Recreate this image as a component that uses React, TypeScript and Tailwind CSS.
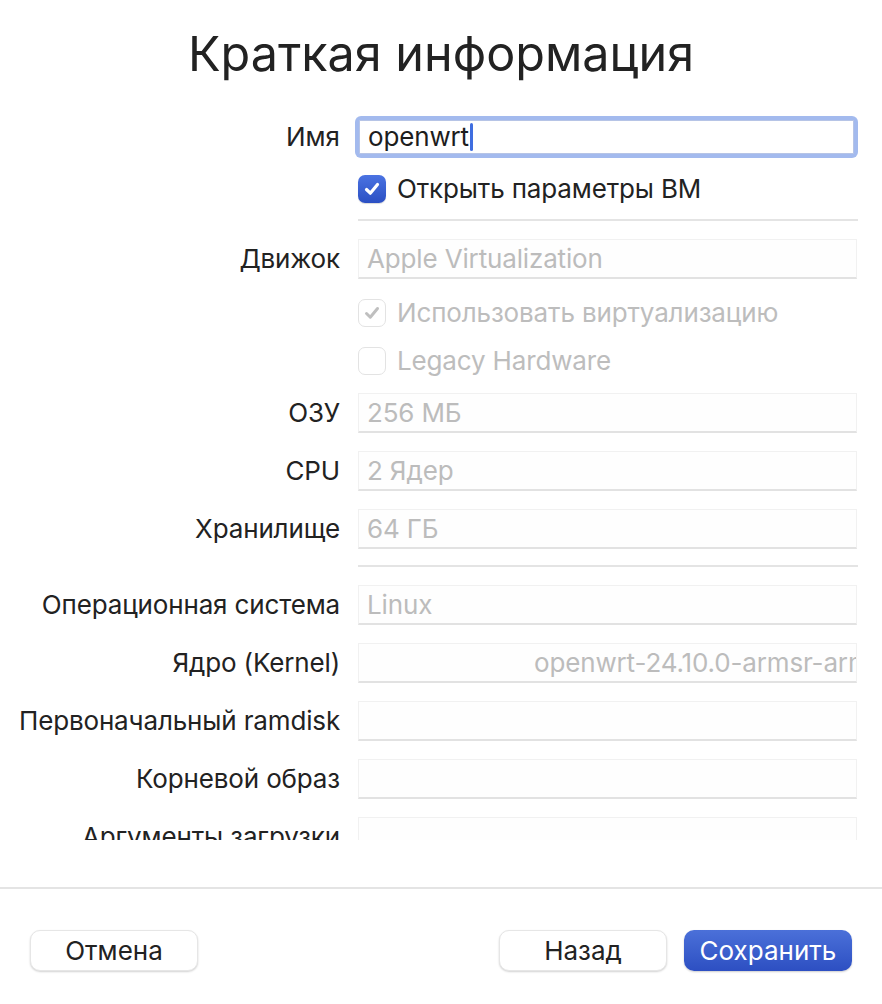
import React from "react";

const FONT = { fontFamily: "Inter, 'Noto Sans', sans-serif" };

function Check({ color, w }: { color: string; w: number }) {
  return (
    <svg width="18" height="18" viewBox="0 0 18 18" fill="none">
      <path d="M3.5 9.5 L7.3 13.2 L14.5 4.5" stroke={color} strokeWidth={w} strokeLinecap="round" strokeLinejoin="round" />
    </svg>
  );
}

function CheckRow({ label, kind }: { label: string; kind: "on" | "disabledOn" | "disabledOff" }) {
  return (
    <div className="flex h-[28px] items-center">
      <div className="w-[358px] shrink-0" />
      {kind === "on" ? (
        <div className="flex h-[28px] w-[28px] items-center justify-center rounded-[7px] bg-gradient-to-b from-[#4b73e2] to-[#2b4fc3] shadow-[0_1px_1px_rgba(0,0,0,0.15)]">
          <Check color="#ffffff" w={3.2} />
        </div>
      ) : (
        <div className="flex h-[28px] w-[28px] items-center justify-center rounded-[7px] border border-[#e3e3e3] bg-white">
          {kind === "disabledOn" ? <Check color="#bfbfbf" w={3} /> : null}
        </div>
      )}
      <span className={"ml-[11px] text-[26px] leading-none tracking-[-0.15px] " + (kind === "on" ? "text-[#222222]" : "text-[#bdbdbd]")}>{label}</span>
    </div>
  );
}

function FieldRow({ label, value, kernel }: { label: string; value?: string; kernel?: boolean }) {
  return (
    <div className="flex h-[40px] items-center">
      <div className="w-[340px] shrink-0 whitespace-nowrap text-right text-[26px] leading-none tracking-[-0.15px] text-[#222222]">{label}</div>
      <div className="ml-[18px] flex h-[40px] w-[499px] items-center overflow-hidden whitespace-nowrap border border-[#f1f1f1] border-b-2 border-b-[#e2e2e2] bg-[#fefefe] text-[26px] leading-none tracking-[-0.15px] text-[#bcbcbc]">
        {kernel ? (
          <span className="pl-[175px]">openwrt-24.10.0-armsr-armv8-generic-initramfs-kernel.bin</span>
        ) : (
          <span className="pl-[8px]">{value}</span>
        )}
      </div>
    </div>
  );
}

function Sep() {
  return (
    <div className="flex">
      <div className="w-[358px] shrink-0" />
      <div className="h-[2px] w-[500px] bg-[#e4e4e4]" />
    </div>
  );
}

function Btn({ label, primary }: { label: string; primary?: boolean }) {
  return primary ? (
    <div className="flex h-[41px] w-[168px] items-center justify-center rounded-[10px] bg-gradient-to-b from-[#4b70d9] to-[#2d4fc2] text-[26px] leading-none text-white shadow-[0_1px_2px_rgba(0,0,0,0.2)]">
      {label}
    </div>
  ) : (
    <div className="flex h-[41px] w-[168px] items-center justify-center rounded-[10px] border border-[#e6e6e6] bg-white text-[26px] leading-none text-[#222222] shadow-[0_1px_2px_rgba(0,0,0,0.18)]">
      {label}
    </div>
  );
}

export default function App() {
  return (
    <div className="relative flex h-[1004px] w-[882px] flex-col overflow-hidden bg-white" style={FONT}>
      <div className="flex h-[110px] shrink-0 justify-center pt-[25px]">
        <h1 className="text-[48.5px] font-normal leading-[58px] text-[#222222]">Краткая информация</h1>
      </div>
      <div className="h-[730px] shrink-0 overflow-hidden">
        <div className="flex flex-col">
          <div className="mt-[6px] flex h-[42px] items-center">
            <div className="w-[340px] shrink-0 text-right text-[26px] leading-none text-[#222222]">Имя</div>
            <div className="ml-[15px] h-[42px] w-[503px] rounded-[6px] bg-[#a3baee] p-[4px]">
              <div className="flex h-full w-full items-center border border-[#b6c4e6] bg-white pl-[8px] text-[26px] leading-none tracking-[-0.15px] text-[#1d1d1d]">
                <span>openwrt</span>
                <span className="ml-[1px] h-[28px] w-[3px] rounded-full bg-[#3f6ee0]" />
              </div>
            </div>
          </div>
          <div className="mt-[17px]">
            <CheckRow label="Открыть параметры ВМ" kind="on" />
          </div>
          <div className="mt-[16px]">
            <Sep />
          </div>
          <div className="mt-[18px]">
            <FieldRow label="Движок" value="Apple Virtualization" />
          </div>
          <div className="mt-[20px]">
            <CheckRow label="Использовать виртуализацию" kind="disabledOn" />
          </div>
          <div className="mt-[20px]">
            <CheckRow label="Legacy Hardware" kind="disabledOff" />
          </div>
          <div className="mt-[18px]">
            <FieldRow label="ОЗУ" value="256 МБ" />
          </div>
          <div className="mt-[18px]">
            <FieldRow label="CPU" value="2 Ядер" />
          </div>
          <div className="mt-[18px]">
            <FieldRow label="Хранилище" value="64 ГБ" />
          </div>
          <div className="mt-[16px]">
            <Sep />
          </div>
          <div className="mt-[18px]">
            <FieldRow label="Операционная система" value="Linux" />
          </div>
          <div className="mt-[18px]">
            <FieldRow label="Ядро (Kernel)" kernel />
          </div>
          <div className="mt-[18px]">
            <FieldRow label="Первоначальный ramdisk" value="" />
          </div>
          <div className="mt-[18px]">
            <FieldRow label="Корневой образ" value="" />
          </div>
          <div className="mt-[18px]">
            <FieldRow label="Аргументы загрузки" value="" />
          </div>
        </div>
      </div>
      <div className="mt-[47px] h-[2px] w-full bg-[#e4e4e4]" />
      <div className="mt-[41px] flex items-center px-[30px]">
        <Btn label="Отмена" />
        <div className="flex-1" />
        <Btn label="Назад" />
        <div className="ml-[17px]">
          <Btn label="Сохранить" primary />
        </div>
      </div>
    </div>
  );
}
